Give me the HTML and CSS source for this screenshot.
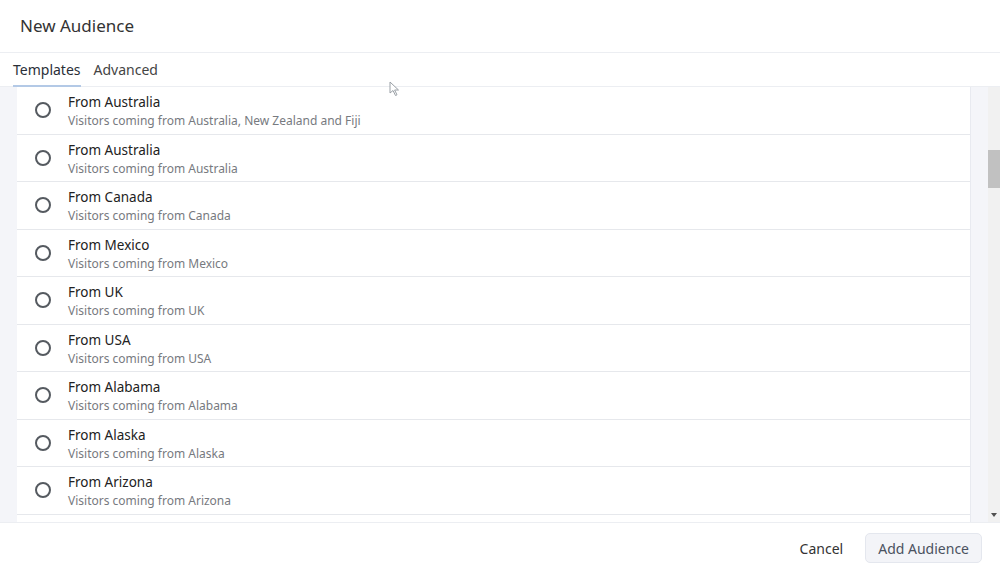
FILE: index.html
```html
<!DOCTYPE html>
<html lang="en">
<head>
    <meta charset="UTF-8">
    <title>New Audience</title>
    <link rel="stylesheet" href="styles.css">
</head>
<body>
    <div class="dialog">
        <div class="dialog-header">New Audience</div>

        <div class="tabs">
            <span class="tab active">Templates</span>
            <span class="tab">Advanced</span>
        </div>

        <div class="dialog-body">
            <ul class="template-list">
                <li class="template"><span class="radio"></span><div class="template-text"><div class="template-name">From Australia</div><div class="template-desc">Visitors coming from Australia, New Zealand and Fiji</div></div></li>
                <li class="template"><span class="radio"></span><div class="template-text"><div class="template-name">From Australia</div><div class="template-desc">Visitors coming from Australia</div></div></li>
                <li class="template"><span class="radio"></span><div class="template-text"><div class="template-name">From Canada</div><div class="template-desc">Visitors coming from Canada</div></div></li>
                <li class="template"><span class="radio"></span><div class="template-text"><div class="template-name">From Mexico</div><div class="template-desc">Visitors coming from Mexico</div></div></li>
                <li class="template"><span class="radio"></span><div class="template-text"><div class="template-name">From UK</div><div class="template-desc">Visitors coming from UK</div></div></li>
                <li class="template"><span class="radio"></span><div class="template-text"><div class="template-name">From USA</div><div class="template-desc">Visitors coming from USA</div></div></li>
                <li class="template"><span class="radio"></span><div class="template-text"><div class="template-name">From Alabama</div><div class="template-desc">Visitors coming from Alabama</div></div></li>
                <li class="template"><span class="radio"></span><div class="template-text"><div class="template-name">From Alaska</div><div class="template-desc">Visitors coming from Alaska</div></div></li>
                <li class="template"><span class="radio"></span><div class="template-text"><div class="template-name">From Arizona</div><div class="template-desc">Visitors coming from Arizona</div></div></li>
                <li class="template"></li>
            </ul>
            <div class="scrollbar">
                <div class="scroll-thumb"></div>
                <span class="scroll-arrow"></span>
            </div>
        </div>

        <div class="dialog-footer">
            <button class="btn btn-link">Cancel</button>
            <button class="btn btn-light">Add Audience</button>
        </div>

        <svg class="cursor" width="12" height="16" viewBox="0 0 12 16">
            <path d="M1 1 L1 12 L4 9.5 L6.5 14.5 L8 13.8 L5.6 9 L9.5 9 Z" fill="#fff" stroke="#9aa0a6" stroke-width="1"/>
        </svg>
    </div>
</body>
</html>
```

FILE: styles.css
```css
* {
    box-sizing: border-box;
}

body {
    margin: 0;
    font-family: "Noto Sans", "Open Sans", sans-serif;
    background: #fff;
    color: #222;
}

.dialog {
    position: relative;
    display: flex;
    flex-direction: column;
    width: 1000px;
    height: 571px;
    overflow: hidden;
    background: #fff;
}

.dialog-header {
    height: 53px;
    flex: none;
    display: flex;
    align-items: center;
    padding: 0 20px 2px;
    font-size: 17px;
    color: #333;
    border-bottom: 1px solid #eceef2;
}

.tabs {
    height: 34px;
    flex: none;
    display: flex;
    padding-left: 13px;
    gap: 13px;
    border-bottom: 1px solid #eceef2;
}

.tab {
    display: flex;
    align-items: center;
    padding-top: 1px;
    font-size: 14px;
    color: #444;
    border-bottom: 2px solid transparent;
    margin-bottom: -1px;
}

.tab.active {
    color: #2a2f38;
    border-bottom-color: #b3c9e6;
}

.dialog-body {
    flex: 1;
    display: flex;
    min-height: 0;
    background: #f4f5f9;
}

.template-list {
    list-style: none;
    margin: 0 0 0 17px;
    padding: 0;
    width: 954px;
    flex: none;
    overflow: hidden;
    background: #fff;
    border-right: 1px solid #e8eaf0;
}

.template {
    height: 47.5px;
    flex: none;
    display: flex;
    align-items: flex-start;
    padding-left: 18px;
    border-bottom: 1px solid #e6e8ec;
}

.radio {
    flex: none;
    width: 16px;
    height: 16px;
    margin-top: 15px;
    border: 2px solid #555a60;
    border-radius: 50%;
}

.template-text {
    margin-left: 17px;
    padding-top: 5px;
}

.template-name {
    font-size: 13.5px;
    line-height: 20px;
    color: #222;
}

.template-desc {
    font-size: 12px;
    line-height: 17px;
    color: #777a80;
}

.scrollbar {
    position: relative;
    margin-left: auto;
    width: 12px;
    background: #f1f1f1;
}

.scroll-thumb {
    margin-top: 63px;
    height: 38px;
    background: #c1c1c1;
}

.scroll-arrow {
    position: absolute;
    left: 3px;
    bottom: 5px;
    border-left: 3px solid transparent;
    border-right: 3px solid transparent;
    border-top: 4px solid #505050;
}

.dialog-footer {
    height: 49px;
    flex: none;
    display: flex;
    align-items: center;
    justify-content: flex-end;
    gap: 10px;
    padding: 2px 18px 0 0;
    border-top: 1px solid #eceef2;
}

.btn {
    font-family: inherit;
    font-size: 14px;
    height: 30px;
    padding: 0 12px;
    border-radius: 5px;
    cursor: pointer;
}

.btn-link {
    background: none;
    border: none;
    color: #333;
}

.btn-light {
    background: #f3f4f8;
    border: 1px solid #e4e7ee;
    color: #4b5260;
}

.cursor {
    position: absolute;
    left: 389px;
    top: 81px;
}
```
